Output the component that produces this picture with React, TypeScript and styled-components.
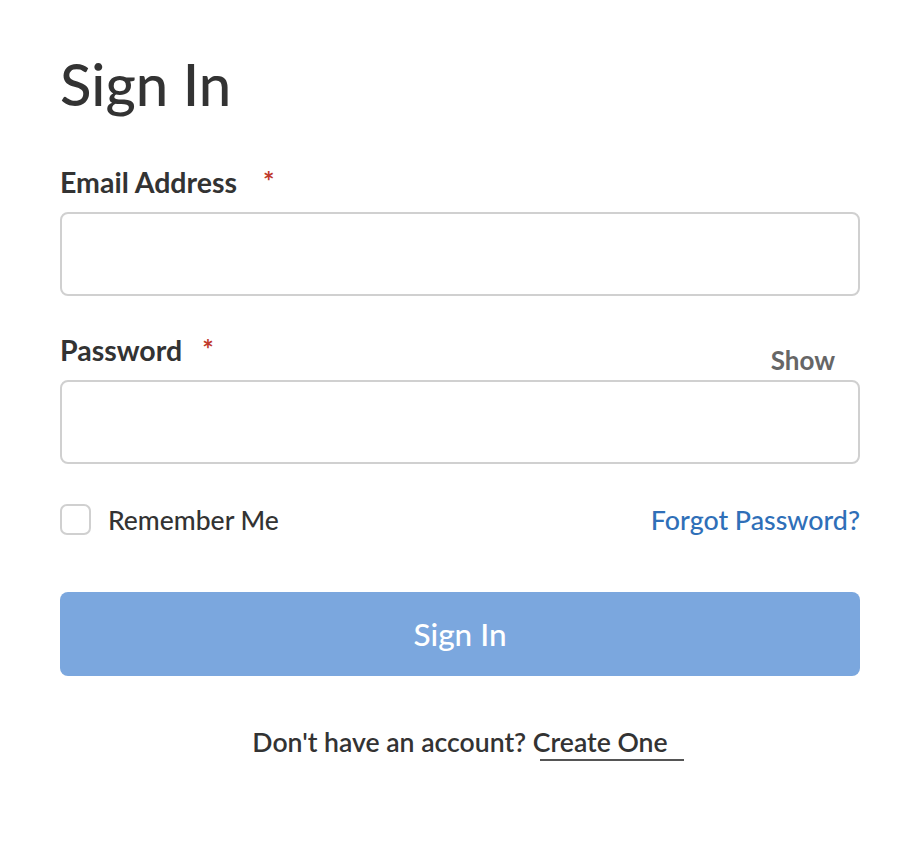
import React, { useState } from "react";
import styled, { createGlobalStyle } from "styled-components";

const GlobalStyle = createGlobalStyle`
  html, body {
    margin: 0;
    padding: 0;
    background: #fff;
  }
  body {
    font-family: Lato, "Open Sans", sans-serif;
    color: #333;
  }
`;

const Page = styled.div`
  padding: 48px 60px 60px 60px;
  width: 800px;
`;

const Title = styled.h1`
  margin: 0 0 45px 0;
  font-size: 58px;
  font-weight: 500;
  line-height: 72px;
  color: #333;
`;

const Field = styled.div`
  display: flex;
  flex-direction: column;
  margin-bottom: 37px;
`;

const LabelRow = styled.div`
  display: flex;
  align-items: flex-end;
  justify-content: space-between;
  height: 34px;
  margin-bottom: 13px;
`;

const Label = styled.label<{ $gap: number }>`
  font-size: 28.5px;
  line-height: 34px;
  font-weight: 700;
  color: #333;
  display: flex;
  gap: ${(p) => p.$gap}px;
`;

const Star = styled.span`
  color: #c0392b;
  font-size: 27px;
  font-weight: 700;
  line-height: 32px;
`;

const ShowButton = styled.button`
  border: none;
  background: transparent;
  font-family: inherit;
  font-size: 26px;
  line-height: 30px;
  font-weight: 700;
  color: #666;
  padding: 0 25px 0 0;
  cursor: pointer;
  position: relative;
  top: 8px;
`;

const Input = styled.input`
  box-sizing: border-box;
  width: 100%;
  height: 84px;
  border: 2px solid #d0d0d0;
  border-radius: 8px;
  font-size: 24px;
  padding: 0 20px;
  font-family: inherit;
  outline: none;
`;

const OptionsRow = styled.div`
  display: flex;
  justify-content: space-between;
  align-items: center;
  height: 31px;
  margin-top: 40px;
  margin-bottom: 57px;
`;

const CheckLabel = styled.label`
  display: flex;
  align-items: center;
  gap: 17px;
  font-size: 26.5px;
  font-weight: 500;
  color: #333;
`;

const Box = styled.span`
  box-sizing: border-box;
  width: 31px;
  height: 31px;
  border: 2px solid #d0d0d0;
  border-radius: 7px;
`;

const ForgotLink = styled.a`
  font-size: 26.8px;
  color: #2f6fb8;
  text-decoration: none;
  font-weight: 500;
`;

const SubmitButton = styled.button`
  width: 100%;
  height: 84px;
  border: none;
  border-radius: 8px;
  background: #7ba7de;
  color: #fff;
  font-family: inherit;
  font-size: 31.5px;
  font-weight: 500;
`;

const Footer = styled.p`
  margin: 49px 0 0 0;
  text-align: center;
  font-size: 26.6px;
  line-height: 34px;
  font-weight: 600;
  color: #333;
`;

const CreateLink = styled.a`
  position: relative;
  color: #333;
  text-decoration: none;

  &::after {
    content: "";
    position: absolute;
    left: 7px;
    right: -16px;
    bottom: -3px;
    height: 2px;
    background: #555;
  }
`;

export default function App() {
  const [show, setShow] = useState(false);
  return (
    <>
      <GlobalStyle />
      <Page>
        <Title>Sign In</Title>
        <Field>
          <LabelRow>
            <Label $gap={26}>
              Email Address <Star>*</Star>
            </Label>
          </LabelRow>
          <Input type="email" />
        </Field>
        <Field>
          <LabelRow>
            <Label $gap={20}>
              Password <Star>*</Star>
            </Label>
            <ShowButton onClick={() => setShow(!show)}>Show</ShowButton>
          </LabelRow>
          <Input type={show ? "text" : "password"} />
        </Field>
        <OptionsRow>
          <CheckLabel>
            <Box />
            Remember Me
          </CheckLabel>
          <ForgotLink href="#">Forgot Password?</ForgotLink>
        </OptionsRow>
        <SubmitButton>Sign In</SubmitButton>
        <Footer>
          Don't have an account? <CreateLink href="#">Create One</CreateLink>
        </Footer>
      </Page>
    </>
  );
}
